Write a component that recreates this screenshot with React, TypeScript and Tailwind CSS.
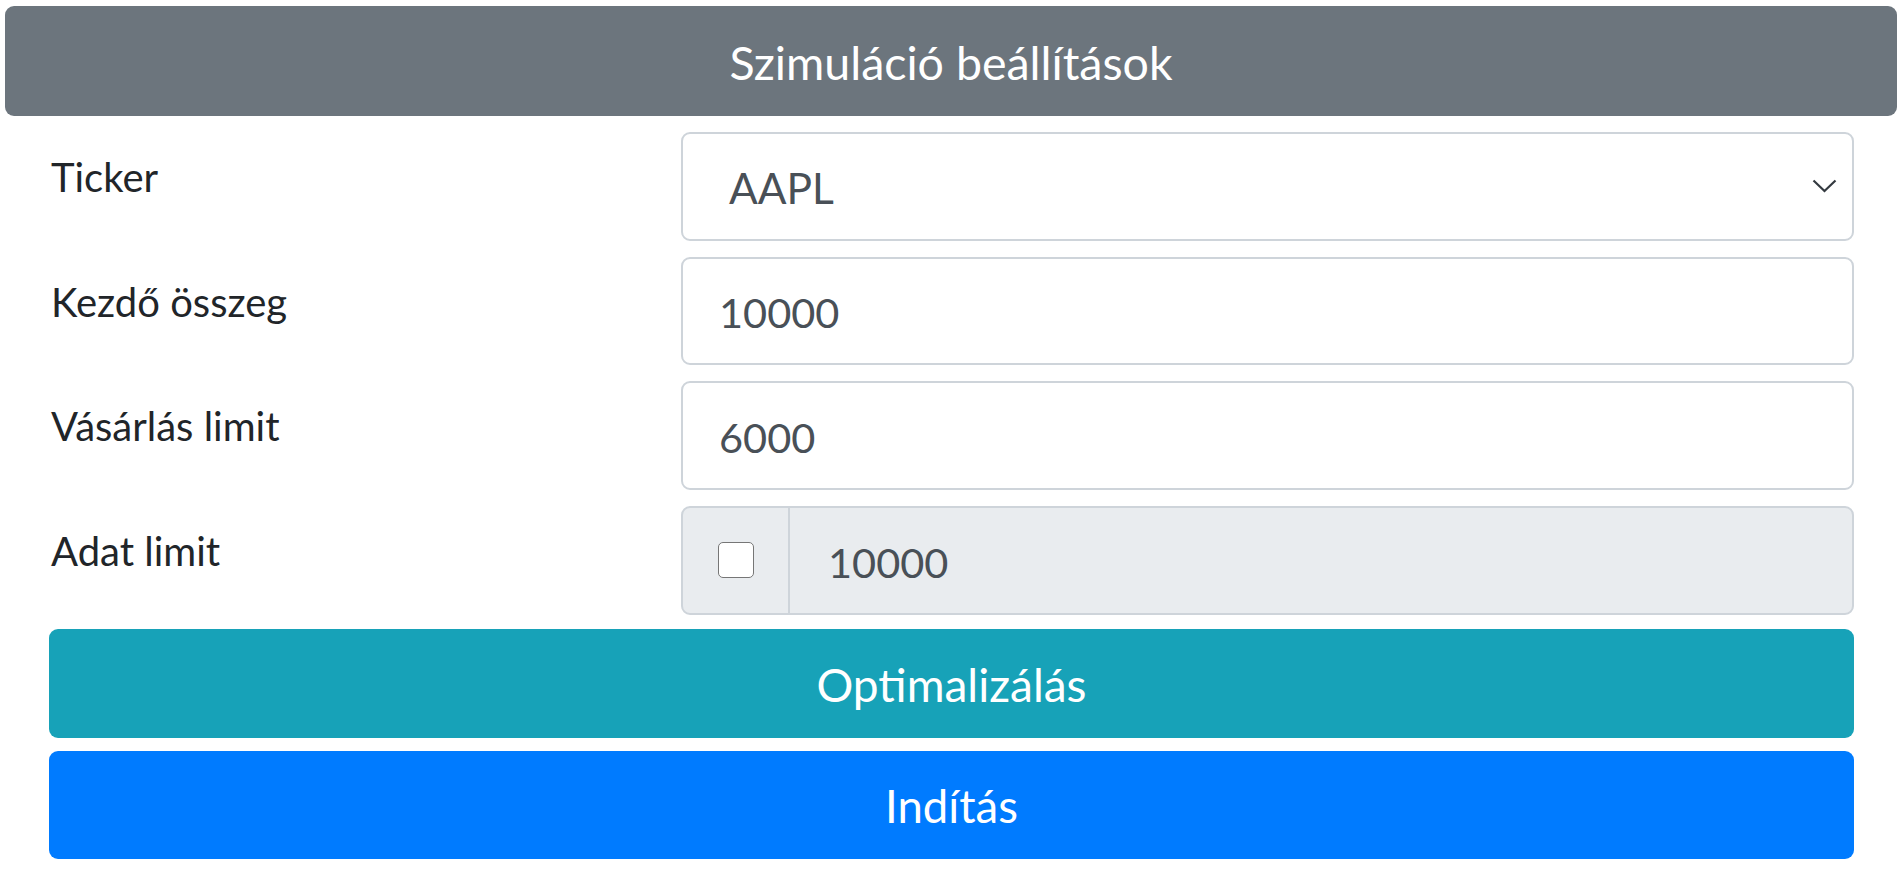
import React, { useState } from "react";

const rowClass = "flex h-[108.67px]";
const labelClass = "w-[632px] shrink-0 pl-[2px] pt-[15px] text-[40px] leading-[60px] text-[#212529]";

export default function App() {
  const [useLimit, setUseLimit] = useState(false);

  return (
    <div className="min-h-screen bg-white font-['Lato',sans-serif]">
      {/* Card header */}
      <div className="ml-[5px] mr-[7px] pt-[6px]">
        <div className="flex h-[110px] items-center justify-center rounded-[9px] bg-[#6c757d] pt-[4px] text-[46.5px] text-white">
          Szimuláció beállítások
        </div>
      </div>

      <div className="ml-[49px] mr-[50px] mt-[16px]">
        <div className="flex flex-col gap-[16px]">
          {/* Ticker */}
          <div className={rowClass}>
            <label className={labelClass}>Ticker</label>
            <div className="relative flex flex-1 items-center rounded-[9px] border-2 border-[#ced4da] bg-white pl-[46px] pt-[3px] text-[42.5px] text-[#495057]">
              AAPL
              <svg
                className="absolute right-[15px] top-1/2 -translate-y-1/2"
                width="25"
                height="14"
                viewBox="0 0 25 14"
                fill="none"
              >
                <path d="M1.5 1.5 L12.5 12 L23.5 1.5" stroke="#343a40" strokeWidth="2.2" />
              </svg>
            </div>
          </div>

          {/* Kezdő összeg */}
          <div className={rowClass}>
            <label className={labelClass}>Kezdő összeg</label>
            <div className="flex flex-1 items-center rounded-[9px] border-2 border-[#ced4da] bg-white pl-[36px] pt-[3px] text-[41.5px] text-[#495057]">
              10000
            </div>
          </div>

          {/* Vásárlás limit */}
          <div className={rowClass}>
            <label className={labelClass}>Vásárlás limit</label>
            <div className="flex flex-1 items-center rounded-[9px] border-2 border-[#ced4da] bg-white pl-[36px] pt-[3px] text-[41.5px] text-[#495057]">
              6000
            </div>
          </div>

          {/* Adat limit */}
          <div className={rowClass}>
            <label className={labelClass}>Adat limit</label>
            <div className="flex flex-1 rounded-[9px] border-2 border-[#ced4da] bg-[#e9ecef]">
              <div className="flex w-[107px] shrink-0 items-center justify-center border-r-2 border-[#ced4da]">
                <button
                  onClick={() => setUseLimit(!useLimit)}
                  className="h-[36px] w-[36px] rounded-[5px] border-[1.5px] border-[#767676] bg-white"
                />
              </div>
              <div className="flex flex-1 items-center pl-[38px] pt-[3px] text-[41.5px] text-[#495057]">
                10000
              </div>
            </div>
          </div>
        </div>

        <button className="mt-[14.33px] flex h-[108.67px] w-full items-center justify-center rounded-[9px] bg-[#17a2b8] pt-[2px] text-[46px] text-white">
          Optimalizálás
        </button>
        <button className="mt-[13px] flex h-[108.67px] w-full items-center justify-center rounded-[9px] bg-[#007bff] pt-[2px] text-[45.5px] text-white">
          Indítás
        </button>
      </div>
    </div>
  );
}
